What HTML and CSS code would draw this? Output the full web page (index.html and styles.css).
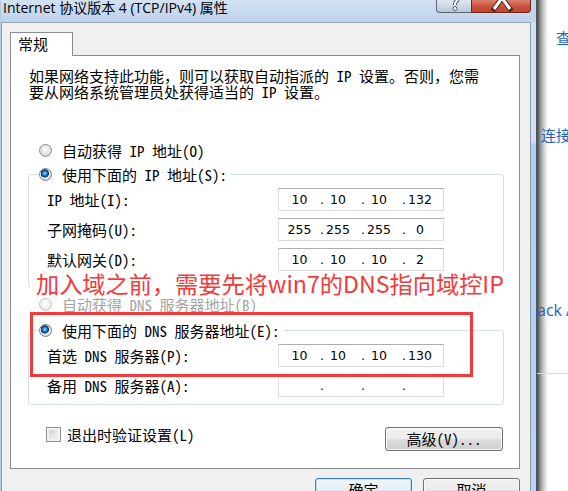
FILE: index.html
```html
<!DOCTYPE html>
<html lang="zh-CN">
<head>
<meta charset="utf-8">
<title>Internet 协议版本 4 (TCP/IPv4) 属性</title>
<link rel="stylesheet" href="styles.css">
</head>
<body>
<div class="screen">
  <div class="window">
    <div class="titlebar">
      <span class="title">Internet 协议版本 4 (TCP/IPv4) 属性</span>
      <div class="caps">
        <span class="cap help"><svg width="35" height="13" viewBox="0 0 35 13"><path d="M15 -3 C15 -6 22 -6 22 -2 C22 1 19 1 19 4 L19 5" fill="none" stroke="#4d5a6b" stroke-width="4"/><path d="M15 -3 C15 -6 22 -6 22 -2 C22 1 19 1 19 4 L19 5" fill="none" stroke="#fff" stroke-width="2"/><circle cx="19" cy="8.5" r="2" fill="#fff" stroke="#4d5a6b" stroke-width="1"/></svg></span>
        <span class="cap close"><svg width="60" height="13" viewBox="0 0 60 13"><path d="M31 -2 L23 9 M31 -2 L39 9" stroke="#5a2216" stroke-width="5" stroke-linecap="square"/><path d="M31 -2 L23 9 M31 -2 L39 9" stroke="#fff" stroke-width="3" stroke-linecap="butt"/></svg></span>
      </div>
    </div>
    <div class="client">
      <div class="tab">常规</div>
      <div class="panel">
        <p class="desc">如果网络支持此功能，则可以获取自动指派的 IP 设置。否则，您需<br>要从网络系统管理员处获得适当的 IP 设置。</p>
        <div class="opt"><span class="radio"></span><span>自动获得 IP 地址(O)</span></div>
        <fieldset class="group g1">
          <legend><span class="opt"><span class="radio on"></span><span>使用下面的 IP 地址(S):</span></span></legend>
          <div class="row first"><span class="lbl">IP 地址(I):</span>
            <div class="ip"><span class="seg"><span class="num">10</span></span><span class="seg"><span class="dot">.</span><span class="num">10</span></span><span class="seg"><span class="dot">.</span><span class="num">10</span></span><span class="seg"><span class="dot">.</span><span class="num">132</span></span></div>
          </div>
          <div class="row"><span class="lbl">子网掩码(U):</span>
            <div class="ip"><span class="seg"><span class="num">255</span></span><span class="seg"><span class="dot">.</span><span class="num">255</span></span><span class="seg"><span class="dot">.</span><span class="num">255</span></span><span class="seg"><span class="dot">.</span><span class="num">0</span></span></div>
          </div>
          <div class="row"><span class="lbl">默认网关(D):</span>
            <div class="ip"><span class="seg"><span class="num">10</span></span><span class="seg"><span class="dot">.</span><span class="num">10</span></span><span class="seg"><span class="dot">.</span><span class="num">10</span></span><span class="seg"><span class="dot">.</span><span class="num">2</span></span></div>
          </div>
        </fieldset>
        <div class="opt dis"><span class="radio"></span><span>自动获得 DNS 服务器地址(B)</span></div>
        <fieldset class="group g2">
          <legend><span class="opt"><span class="radio on"></span><span>使用下面的 DNS 服务器地址(E):</span></span></legend>
          <div class="row first"><span class="lbl">首选 DNS 服务器(P):</span>
            <div class="ip"><span class="seg"><span class="num">10</span></span><span class="seg"><span class="dot">.</span><span class="num">10</span></span><span class="seg"><span class="dot">.</span><span class="num">10</span></span><span class="seg"><span class="dot">.</span><span class="num">130</span></span></div>
          </div>
          <div class="row"><span class="lbl">备用 DNS 服务器(A):</span>
            <div class="ip"><span class="seg"><span class="num"></span></span><span class="seg"><span class="dot">.</span><span class="num"></span></span><span class="seg"><span class="dot">.</span><span class="num"></span></span><span class="seg"><span class="dot">.</span><span class="num"></span></span></div>
          </div>
        </fieldset>
        <div class="bottom-row">
          <span class="check"></span><span class="check-lbl">退出时验证设置(L)</span>
          <button class="btn adv">高级(V)...</button>
        </div>
      </div>
      <div class="footer">
        <button class="btn default">确定</button>
        <button class="btn">取消</button>
      </div>
    </div>
  </div>
  <div class="frame"></div>
  <div class="backdrop">
    <span class="link l1">查</span>
    <span class="link l2">连接</span>
    <span class="link l3">ack A</span>
    <div class="sep"></div>
  </div>
  <div class="note">加入域之前，需要先将win7的DNS指向域控IP</div>
  <div class="mark"></div>
</div>
</body>
</html>
```
FILE: styles.css
```css
html, body {
  margin: 0;
  padding: 0;
  background: #fff;
}

.screen {
  position: relative;
  display: flex;
  width: 568px;
  height: 491px;
  overflow: hidden;
  font-family: "Noto Sans Mono CJK SC", "Noto Sans CJK SC", sans-serif;
  font-size: 15px;
  color: #000;
}

.window {
  flex: none;
  width: 531px;
  box-sizing: border-box;
  border-left: 1px solid #b3cbe5;
  display: flex;
  flex-direction: column;
  background: #c7d9ee;
  overflow: hidden;
}

.titlebar {
  flex: none;
  height: 22px;
  display: flex;
  align-items: flex-start;
  background: linear-gradient(to bottom, #d3e2f3 0%, #c5d8ee 60%, #bfd3eb 100%);
}

.title {
  font-family: "Open Sans", "Noto Sans CJK SC", sans-serif;
  font-size: 14px;
  line-height: 16px;
  margin: 0 0 0 2px;
  color: #000;
  white-space: nowrap;
}

.caps {
  margin-left: auto;
  display: flex;
}

.cap {
  display: block;
  height: 13px;
  box-sizing: border-box;
  overflow: hidden;
}

.cap svg { display: block; }

.help {
  width: 35px;
  border: 1px solid #5c6573;
  border-top: none;
  border-right: none;
  border-radius: 0 0 0 4px;
  background: linear-gradient(to bottom, #dfe6ee 0%, #cfd9e5 50%, #b9c6d6 100%);
}

.help svg { margin-left: -1px; }

.close {
  width: 60px;
  border: 1px solid #6b2a20;
  border-top: none;
  border-radius: 0 0 4px 0;
  background: linear-gradient(to bottom, #d9836f 0%, #c9503a 55%, #c2452f 100%);
}

.close svg { margin-left: -1px; }

.client {
  flex: none;
  min-height: 0;
  box-sizing: border-box;
  border-top: 1px solid #97a3b2;
  border-left: 1px solid #8d99a8;
  border-right: 1px solid #8d99a8;
  background: #f0f0f0;
  padding: 9px 10px 0 8px;
}

.tab {
  position: relative;
  width: 63px;
  height: 24px;
  box-sizing: border-box;
  border: 1px solid #898c95;
  border-bottom: none;
  background: #fff;
  padding-left: 7px;
  line-height: 22px;
  margin-bottom: -1px;
}

.panel {
  width: 510px;
  box-sizing: border-box;
  border: 1px solid #898c95;
  background: #fff;
  padding: 0 0 17px 0;
}

.desc {
  margin: 12px 0 0 18px;
  line-height: 16px;
  white-space: nowrap;
}

.opt {
  display: flex;
  align-items: center;
  height: 24px;
  white-space: nowrap;
}

.panel > .opt {
  padding-left: 28px;
  margin-top: 38px;
}

.panel > .opt.dis {
  margin-top: 4px;
  color: #a3a3a3;
}

.radio {
  flex: none;
  width: 13px;
  height: 13px;
  box-sizing: border-box;
  border-radius: 50%;
  border: 1px solid #8e9091;
  margin-right: 10px;
  background: radial-gradient(circle at 50% 40%, #ffffff 0, #f0f0f0 2.5px, #d6d6d6 6px);
}

.radio.on {
  border-color: #7d8285;
  background: radial-gradient(circle at 44% 40%, #c9f0ff 0, #3c9ee3 1.4px, #135ca3 2.8px, #0b3866 3.9px, #eeeeee 4.4px, #d9d9d9 6px);
}

.dis .radio {
  border-color: #c3c4c5;
  background: radial-gradient(circle at 50% 40%, #fff 0, #f6f6f6 3px, #e8e8e8 6px);
}

.group {
  margin: 0 0 0 17px;
  width: 476px;
  min-width: 0;
  box-sizing: border-box;
  border: 1px solid #d5dfe5;
  border-radius: 3px;
  padding: 0;
}

.group legend {
  margin-left: 10px;
  padding: 0 4px 0 0;
}

.g1 { padding-bottom: 16px; }
.g2 { margin-top: 2px; padding-bottom: 7px; }

.row {
  display: grid;
  grid-template-columns: 231px 166px;
  align-items: center;
  height: 23px;
  padding-left: 18px;
  margin-top: 7px;
  white-space: nowrap;
}

.row.first { margin-top: 2px; }

.ip {
  display: flex;
  height: 23px;
  box-sizing: border-box;
  border: 1px solid #dadde3;
  border-top-color: #abadb3;
  font-family: "DejaVu Sans", sans-serif;
  font-size: 12.5px;
  line-height: 21px;
  background: #fff;
}

.seg {
  display: flex;
  width: 41px;
}

.seg .num {
  flex: 1;
  text-align: center;
}

.seg .dot {
  width: 4px;
  flex: none;
}

.seg .dot + .num {
  padding-right: 9px;
}

.bottom-row {
  display: flex;
  align-items: flex-start;
  margin-top: 22px;
  padding-left: 35px;
  padding-right: 16px;
  height: 24px;
}

.check {
  flex: none;
  width: 15px;
  height: 15px;
  box-sizing: border-box;
  border: 1px solid #8e8f8f;
  background: linear-gradient(135deg, #c9ccd0 0%, #e9eaeb 60%, #f4f4f4 100%);
  box-shadow: inset 0 0 0 2px #f3f3f3;
}

.check-lbl {
  margin-left: 6px;
  line-height: 16px;
}

.btn {
  font-family: "Noto Sans Mono CJK SC", "Noto Sans CJK SC", sans-serif;
  font-size: 15px;
  color: #000;
  height: 24px;
  box-sizing: border-box;
  border: 1px solid #707070;
  border-radius: 3px;
  padding: 0;
  line-height: 20px;
  background: linear-gradient(to bottom, #f2f2f2 0%, #ebebeb 50%, #dddddd 51%, #cfcfcf 100%);
  box-shadow: inset 0 0 0 1px #fbfbfb;
}

.adv {
  margin-left: auto;
  width: 118px;
}

.footer {
  display: flex;
  justify-content: flex-end;
  gap: 11px;
  margin-top: 9px;
}

.footer .btn {
  width: 97px;
}

.footer .default {
  border-color: #3c7fb1;
  box-shadow: inset 0 0 0 1px #b9e0f7;
  background: linear-gradient(to bottom, #f1f6fa 0%, #e6eef5 50%, #d6e3ee 51%, #c9d9e7 100%);
}

.frame {
  flex: none;
  width: 6px;
  box-sizing: border-box;
  border-right: 1px solid #4f5660;
  background: linear-gradient(to bottom, #c2d4e8 0px, #c2d4e8 22px, #cfe1f3 23px, #cfe1f3 140px, #abd0f4 146px, #b5d6f5 100%);
}

.backdrop {
  flex: 1;
  display: flex;
  flex-direction: column;
  align-items: flex-start;
  background: linear-gradient(to right, rgba(40, 40, 40, 0.85) 0px, rgba(90, 90, 90, 0.45) 5px, rgba(200, 200, 200, 0.15) 10px, rgba(255, 255, 255, 0) 13px), #fff;
  color: #1b63c6;
  font-family: "Noto Sans CJK SC", sans-serif;
  font-size: 15px;
  line-height: 18px;
  white-space: nowrap;
}

.l1 { margin: 29px 0 0 19px; }
.l2 { margin: 79px 0 0 4px; }
.l3 { margin: 157px 0 0 0; font-family: "Open Sans", sans-serif; font-size: 16px; }

.sep {
  align-self: stretch;
  margin-top: 54px;
  border-top: 1px solid #d9d9d9;
}

.note {
  position: absolute;
  left: 30px;
  top: 272px;
  width: 480px;
  padding-left: 6px;
  box-sizing: border-box;
  background: #fff;
  color: #f23a3a;
  font-family: "Noto Sans CJK SC", sans-serif;
  font-size: 23.2px;
  line-height: 22px;
  white-space: nowrap;
}

.mark {
  position: absolute;
  left: 30px;
  top: 312px;
  width: 443px;
  height: 65px;
  box-sizing: border-box;
  border: 3px solid #f23a3a;
}
```
